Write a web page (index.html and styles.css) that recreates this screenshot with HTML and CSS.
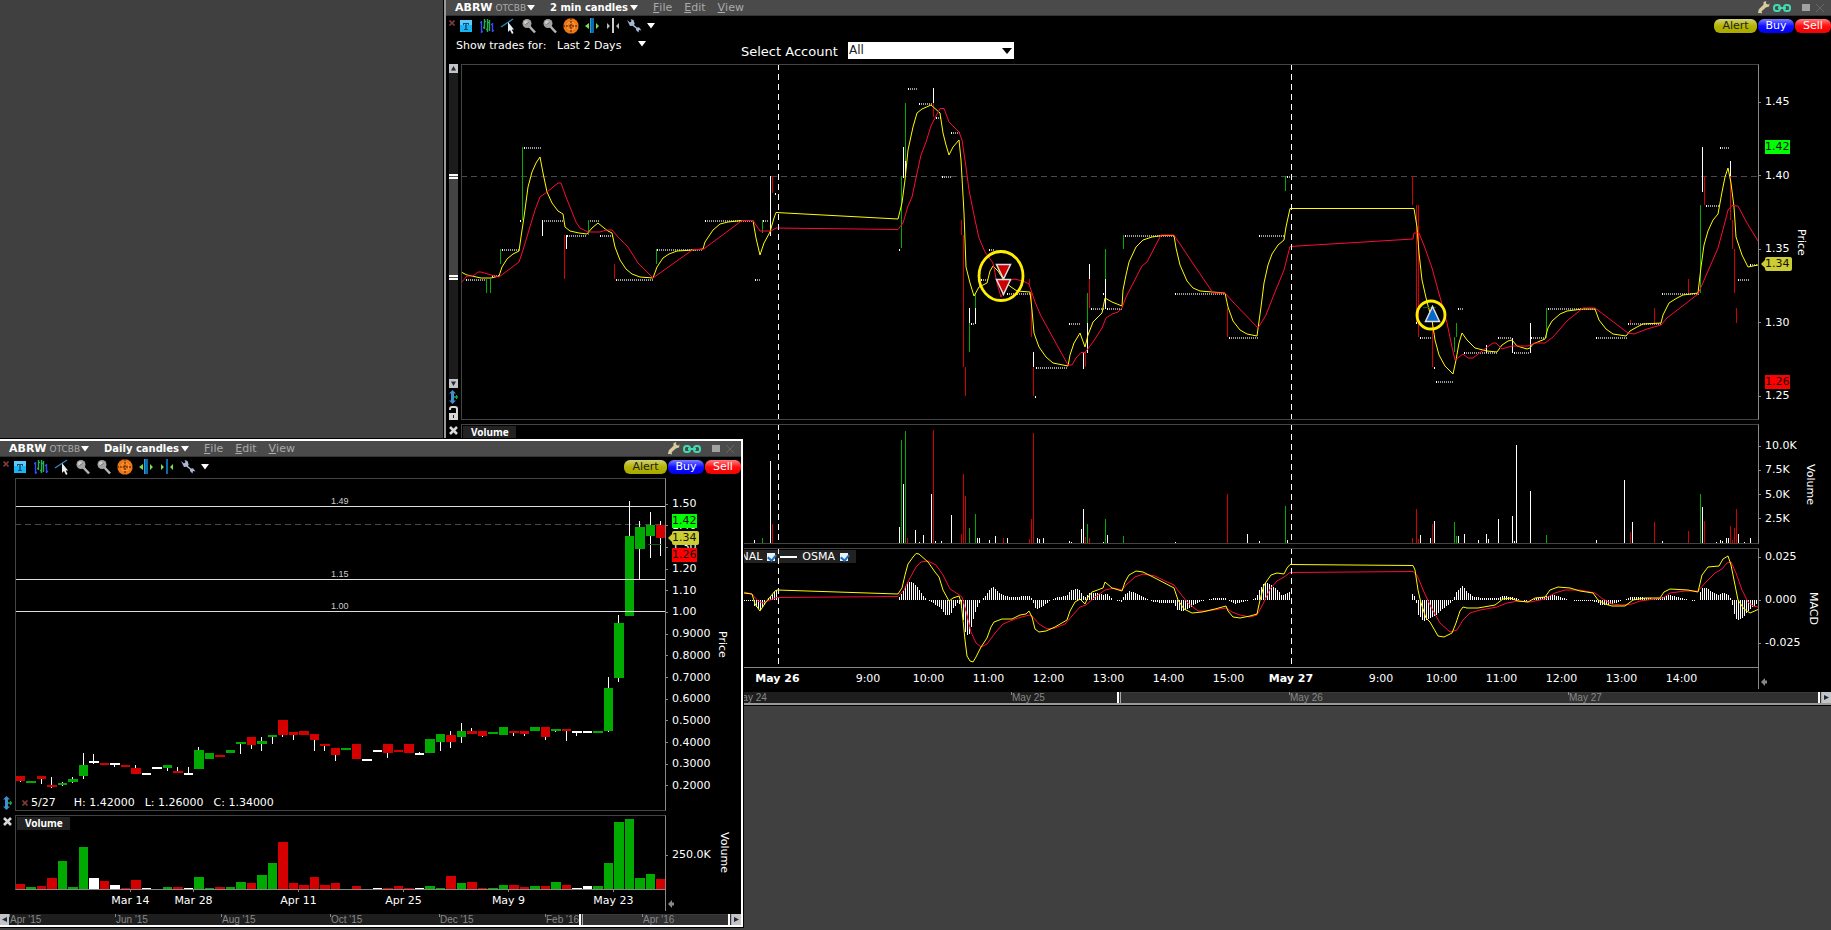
FILE: index.html
```html
<!DOCTYPE html>
<html lang="en">
<head>
<meta charset="utf-8">
<title>ABRW charts</title>
<link rel="stylesheet" href="styles.css">
</head>
<body>
<svg class="symbols" aria-hidden="true">
  <symbol id="i-text" viewBox="0 0 16 16"><rect x="2" y="2" width="12" height="12" fill="#1ab4f4"/><rect x="2" y="2" width="12" height="5" fill="#5ccdfa"/><path d="M5 5h6v2h-1V6H8.700v5H10v1H6v-1h1.300V6H6v1H5z" fill="#0d4a6b"/></symbol>
  <symbol id="i-bars" viewBox="0 0 16 16"><path d="M2.500 3v12M1 4.500h1.500M2.500 13.500H4M13.500 5v9M12 6.500h1.500M13.500 12.500H15" stroke="#3a48ff" stroke-width="1.400"/><path d="M5.500 1v10M4 9.500h1.500M5.500 3.500H7M8.500 1v13M10.500 2v11M8.500 4.500h2M7 11.500h1.500" stroke="#22b350" stroke-width="1.400" fill="none"/></symbol>
  <symbol id="i-cursor" viewBox="0 0 16 16"><path d="M1 9L13 1" stroke="#2f86c0" stroke-width="1.400"/><path d="M8 4v10l2-2 2 4 1.500-1-1.700-3.500H14z" fill="#e8eef2"/></symbol>
  <symbol id="i-zoom" viewBox="0 0 16 16"><path d="M8 8l6 6.500" stroke="#b4b4b4" stroke-width="2.500"/><circle cx="6" cy="5.500" r="4.500" fill="#a4a4a4"/><circle cx="5" cy="4.500" r="2" fill="#cfcfcf"/><path d="M4.500 6.500l3-2" stroke="#666"/></symbol>
  <symbol id="i-cross" viewBox="0 0 16 16"><circle cx="8" cy="8" r="7.700" fill="#ee7716"/><circle cx="8" cy="8" r="4" fill="none" stroke="#ff9b40"/><path d="M8 0v16M0 8h16" stroke="#3a1c02" stroke-dasharray="2 1"/></symbol>
  <symbol id="i-widen" viewBox="0 0 16 16"><rect x="6" width="4" height="15" fill="#0b6aa8"/><rect x="6" width="1" height="15" fill="#2e9bd6"/><path d="M5 5v6L1 8zM12 5v6l3-3z" fill="#7be04a"/></symbol>
  <symbol id="i-narrow" viewBox="0 0 16 16"><rect x="7" width="2" height="15" fill="#0b6aa8"/><path d="M2 5v6l3-3zM14 5v6l-3-3z" fill="#7be04a"/></symbol>
  <symbol id="i-narrow-off" viewBox="0 0 16 16"><rect x="7" width="2" height="15" fill="#ccc"/><path d="M2 5v6l3-3zM14 5v6l-3-3z" fill="#bbb"/></symbol>
  <symbol id="i-wrench" viewBox="0 0 16 16"><path d="M1 2l3 2.500L5.500 3 4.500 1l3 1 1.200 3.500-.7 1.500 3 2.500 2-.2 2.500 3.200-2.500-.5-.5 2.500-2.500-2.500v-1.500L6.500 7.800 4 8z" fill="#a9b7d2"/></symbol>
  <symbol id="i-key" viewBox="0 0 14 14"><path d="M1 13l1-4 5-5V1l3-1-.5 2.500L12 4l1.500-1.500L13 6 9.500 7 5 11l.5 2.500-2-.5z" fill="#d8cba0"/></symbol>
  <symbol id="i-link" viewBox="0 0 18 10"><rect x="1" y="2" width="6" height="6" rx="2.500" fill="none" stroke="#3fdcb0" stroke-width="2"/><rect x="11" y="2" width="6" height="6" rx="2.500" fill="none" stroke="#3fdcb0" stroke-width="2"/><path d="M5 5h8" stroke="#3fdcb0" stroke-width="2"/></symbol>
  <symbol id="i-square" viewBox="0 0 8 7"><path d="M0 0h8v7H0z" fill="#a2a2a2"/></symbol>
  <symbol id="i-thinx" viewBox="0 0 8 8"><path d="M0 0l8 8M8 0L0 8" stroke="#666"/></symbol>
  <symbol id="i-redx" viewBox="0 0 6 6"><path d="M.5 .5l5 5M5.500 .5l-5 5" stroke="#7c3a3a" stroke-width="1.600"/></symbol>
  <symbol id="i-fatx" viewBox="0 0 9 9"><path d="M1 1l7 7M8 1L1 8" stroke="#d8d8d8" stroke-width="2.500"/></symbol>
  <symbol id="i-caret" viewBox="0 0 8 6"><path d="M0 0h8L4 5.500z" fill="#fff"/></symbol>
  <symbol id="i-updown" viewBox="0 0 9 14"><path d="M3.500 0l3.500 3.500H5v7h2L3.500 14 0 10.500h2v-7H0z" fill="#3f8fd2"/><path d="M5 7h4M7.500 5v4" stroke="#12a84a" stroke-width="1.300"/></symbol>
  <symbol id="i-lock" viewBox="0 0 9 14"><path d="M1 4V3q0-2 2-2h3q2 0 2 2v4" fill="none" stroke="#d6d6d6" stroke-width="2"/><rect y="7" width="9" height="7" fill="#d6d6d6"/><path d="M4.500 9v3" stroke="#222"/></symbol>
  <symbol id="i-up" viewBox="0 0 9 9"><path d="M0 0h9v9H0z" fill="#c4c4c4"/><path d="M4.500 2L7 6.500H2z" fill="#1c2a44"/></symbol>
  <symbol id="i-down" viewBox="0 0 9 9"><path d="M0 0h9v9H0z" fill="#c4c4c4"/><path d="M4.500 7L7 2.500H2z" fill="#1c2a44"/></symbol>
  <symbol id="i-left" viewBox="0 0 9 11"><path d="M0 0h9v11H0z" fill="#c4c4c4"/><path d="M2 5.500L7 3v5z" fill="#1c2a44"/></symbol>
  <symbol id="i-right" viewBox="0 0 9 11"><path d="M0 0h9v11H0z" fill="#c4c4c4"/><path d="M7 5.500L2 3v5z" fill="#1c2a44"/></symbol>
  <symbol id="i-back" viewBox="0 0 6 8"><path d="M0 4l4-4v2.500h2v3H4V8z" fill="#888"/></symbol>
</svg>

<main class="desktop">
  <section class="window window-intraday" aria-label="2 minute chart">
    <header class="titlebar">
      <button class="symbol"><b>ABRW</b> <span>OTCBB</span><svg class="caret"><use href="#i-caret"/></svg></button>
      <button class="period">2 min candles<svg class="caret"><use href="#i-caret"/></svg></button>
      <nav class="menu"><button><u>F</u>ile</button><button><u>E</u>dit</button><button><u>V</u>iew</button></nav>
      <div class="winctl">
        <button aria-label="Settings"><svg width="13" height="13"><use href="#i-key"/></svg></button>
        <button aria-label="Link"><svg width="18" height="10"><use href="#i-link"/></svg></button>
        <button class="max" aria-label="Maximize"><svg width="8" height="7"><use href="#i-square"/></svg></button>
        <button aria-label="Close"><svg width="8" height="8"><use href="#i-thinx"/></svg></button>
      </div>
    </header>
    <div class="toolbar">
      <button class="hide" aria-label="Hide toolbar"><svg width="6" height="6"><use href="#i-redx"/></svg></button>
      <button class="tool" aria-label="Text"><svg><use href="#i-text"/></svg></button>
      <button class="tool" aria-label="Bars"><svg><use href="#i-bars"/></svg></button>
      <button class="tool" aria-label="Trend line"><svg><use href="#i-cursor"/></svg></button>
      <button class="tool" aria-label="Zoom in"><svg><use href="#i-zoom"/></svg></button>
      <button class="tool" aria-label="Zoom out"><svg><use href="#i-zoom"/></svg></button>
      <button class="tool" aria-label="Crosshair"><svg><use href="#i-cross"/></svg></button>
      <button class="tool" aria-label="Widen"><svg><use href="#i-widen"/></svg></button>
      <button class="tool" aria-label="Narrow"><svg><use href="#i-narrow-off"/></svg></button>
      <button class="tool" aria-label="Configure"><svg><use href="#i-wrench"/></svg></button>
      <button aria-label="More"><svg class="caret"><use href="#i-caret"/></svg></button>
      <div class="orders"><button class="alert">Alert</button><button class="buy">Buy</button><button class="sell">Sell</button></div>
    </div>
    <div class="filters">
      <span class="trades">Show trades for:</span>
      <button class="days">Last 2 Days<svg class="caret"><use href="#i-caret"/></svg></button>
      <label for="account">Select Account</label>
      <span class="combo"><select id="account"><option>All</option></select></span>
    </div>

    <div class="panel panel-price">
      <div class="gutter">
        <button aria-label="Scroll up"><svg width="9" height="9"><use href="#i-up"/></svg></button>
        <svg class="vtrack" viewBox="0 0 9 303" preserveAspectRatio="none"><path d="M0 0h9v303H0z" fill="#1c1c1c"/><path d="M0 104h9v101H0z" fill="#444"/><path d="M0 100h9v5H0zM0 200h9v5H0z" fill="#fff"/><path d="M0 102.500h9M0 202.500h9" stroke="#555"/></svg>
        <button aria-label="Scroll down"><svg width="9" height="9"><use href="#i-down"/></svg></button>
        <button class="gap" aria-label="Fit"><svg width="9" height="14"><use href="#i-updown"/></svg></button>
        <button class="gap" aria-label="Lock"><svg width="9" height="14"><use href="#i-lock"/></svg></button>
      </div>
      <div class="plot"><svg id="intraday-price" viewBox="462 65 1296 354" preserveAspectRatio="none"></svg></div>
      <div class="axis">
        <ol><li>1.45</li><li>1.40</li><li>1.35</li><li>1.30</li><li>1.25</li></ol>
        <span class="vtitle">Price</span>
        <span class="tag high">1.42</span><span class="tag last">1.34</span><span class="tag low">1.26</span>
      </div>
    </div>
    <div class="panel panel-volume">
      <div class="gutter"><button class="gap" aria-label="Remove volume"><svg width="9" height="9"><use href="#i-fatx"/></svg></button></div>
      <div class="plot"><svg id="intraday-volume" viewBox="462 425 1296 118" preserveAspectRatio="none"></svg><span class="study">Volume</span></div>
      <div class="axis"><ol><li>10.0K</li><li>7.5K</li><li>5.0K</li><li>2.5K</li></ol><span class="vtitle">Volume</span></div>
    </div>
    <div class="panel panel-macd">
      <div class="gutter"></div>
      <div class="plot base">
        <div class="legend">
          <label>SIGNAL <input type="checkbox" checked></label>
          <label><i></i>OSMA <input type="checkbox" checked></label>
        </div>
        <svg id="intraday-macd" viewBox="462 549 1296 118" preserveAspectRatio="none"></svg>
      </div>
      <div class="axis"><ol><li>0.025</li><li>0.000</li><li>-0.025</li></ol><span class="vtitle">MACD</span></div>
    </div>
    <div class="timeline"><svg class="times" id="intraday-times"></svg><svg class="back"><use href="#i-back"/></svg></div>
    <div class="strip"><svg id="intraday-strip"></svg><button aria-label="Scroll right"><svg width="9" height="11"><use href="#i-right"/></svg></button></div>
  </section>

  <section class="window window-daily" aria-label="Daily chart">
    <header class="titlebar">
      <button class="symbol"><b>ABRW</b> <span>OTCBB</span><svg class="caret"><use href="#i-caret"/></svg></button>
      <button class="period">Daily candles<svg class="caret"><use href="#i-caret"/></svg></button>
      <nav class="menu"><button><u>F</u>ile</button><button><u>E</u>dit</button><button><u>V</u>iew</button></nav>
      <div class="winctl">
        <button aria-label="Settings"><svg width="13" height="13"><use href="#i-key"/></svg></button>
        <button aria-label="Link"><svg width="18" height="10"><use href="#i-link"/></svg></button>
        <button class="max" aria-label="Maximize"><svg width="8" height="7"><use href="#i-square"/></svg></button>
        <button aria-label="Close"><svg width="8" height="8"><use href="#i-thinx"/></svg></button>
      </div>
    </header>
    <div class="toolbar">
      <button class="hide" aria-label="Hide toolbar"><svg width="6" height="6"><use href="#i-redx"/></svg></button>
      <button class="tool" aria-label="Text"><svg><use href="#i-text"/></svg></button>
      <button class="tool" aria-label="Bars"><svg><use href="#i-bars"/></svg></button>
      <button class="tool" aria-label="Trend line"><svg><use href="#i-cursor"/></svg></button>
      <button class="tool" aria-label="Zoom in"><svg><use href="#i-zoom"/></svg></button>
      <button class="tool" aria-label="Zoom out"><svg><use href="#i-zoom"/></svg></button>
      <button class="tool" aria-label="Crosshair"><svg><use href="#i-cross"/></svg></button>
      <button class="tool" aria-label="Widen"><svg><use href="#i-widen"/></svg></button>
      <button class="tool" aria-label="Narrow"><svg><use href="#i-narrow"/></svg></button>
      <button class="tool" aria-label="Configure"><svg><use href="#i-wrench"/></svg></button>
      <button aria-label="More"><svg class="caret"><use href="#i-caret"/></svg></button>
      <div class="orders"><button class="alert">Alert</button><button class="buy">Buy</button><button class="sell">Sell</button></div>
    </div>
    <div class="panel panel-price">
      <div class="gutter end"><button aria-label="Fit"><svg width="9" height="14"><use href="#i-updown"/></svg></button></div>
      <div class="plot"><svg id="daily-price" viewBox="16 479 649 331" preserveAspectRatio="none"></svg>
        <div class="readout"><svg width="6" height="6"><use href="#i-redx"/></svg><span class="date">5/27</span><span>H: 1.42000</span><span>L: 1.26000</span><span>C: 1.34000</span></div>
      </div>
      <div class="axis">
        <ol><li>1.50</li><li>1.40</li><li>1.30</li><li>1.20</li><li>1.10</li><li>1.00</li><li>0.9000</li><li>0.8000</li><li>0.7000</li><li>0.6000</li><li>0.5000</li><li>0.4000</li><li>0.3000</li><li>0.2000</li></ol>
        <span class="vtitle">Price</span>
        <span class="tag high">1.42</span><span class="tag low">1.26</span><span class="tag last">1.34</span>
      </div>
    </div>
    <div class="panel panel-volume">
      <div class="gutter"><button class="gap" aria-label="Remove volume"><svg width="9" height="9"><use href="#i-fatx"/></svg></button></div>
      <div class="plot base"><svg id="daily-volume" viewBox="16 816 649 73" preserveAspectRatio="none"></svg><span class="study">Volume</span></div>
      <div class="axis"><ol><li>250.0K</li></ol><span class="vtitle">Volume</span></div>
    </div>
    <div class="timeline"><svg class="times" id="daily-times"></svg><svg class="back"><use href="#i-back"/></svg></div>
    <div class="strip"><button aria-label="Scroll left"><svg width="9" height="11"><use href="#i-left"/></svg></button><svg id="daily-strip"></svg><button aria-label="Scroll right"><svg width="9" height="11"><use href="#i-right"/></svg></button></div>
  </section>
</main>
<script src="chart.js"></script>
</body>
</html>
```
FILE: styles.css
```css
* { box-sizing: border-box; }
body {
  margin: 0;
  background: #404040;
  color: #fff;
  font: 11px/14px "DejaVu Sans", sans-serif;
}
button {
  display: flex;
  align-items: center;
  margin: 0;
  padding: 0;
  border: 0;
  background: none;
  color: inherit;
  font: inherit;
}
svg { display: block; flex: none; }
.symbols { position: absolute; width: 0; height: 0; }
.desktop { position: relative; min-height: 100vh; overflow: hidden; }

/* windows */
.window { position: absolute; background: #000; box-shadow: 0 0 0 1px #000; }
.window-intraday { left: 444px; right: 0; top: 0; border-left: 2px solid #999; border-bottom: 2px solid #999; }
.window-daily { left: 0; top: 439px; width: 743px; border: solid #fff; border-width: 2px 2px 2px 0; }

.titlebar {
  display: flex;
  align-items: center;
  height: 16px;
  padding: 0 7px 0 9px;
  background: #4a4a4a;
  border-bottom: 1px solid #333;
}
.caret { width: 8px; height: 6px; }
.symbol { width: 95px; gap: 3px; }
.symbol b { font-size: 11px; }
.symbol span { color: #aaa; font-size: 9px; margin-right: -2px; }
.period { gap: 2px; font-weight: bold; font-size: 10px; }
.menu { display: flex; gap: 12px; margin-left: 15px; color: #aaa; }
.winctl { display: flex; align-items: center; gap: 3px; margin-left: auto; }
.winctl .max { margin: 0 3px 0 8px; }

.toolbar { display: flex; align-items: center; gap: 5px; height: 21px; padding: 0 0 1px 3px; }
.toolbar .hide { align-self: flex-start; margin: 4px -2px 0 0; }
.tool svg { width: 16px; height: 16px; }
.orders { display: flex; gap: 1px; margin-left: auto; }
.orders button { justify-content: center; width: 36px; height: 14px; border-radius: 6px; }
.orders .alert { width: 43px; color: #222; background: linear-gradient(#d2d27c, #b4b400 50%, #a8a800); }
.orders .buy { background: linear-gradient(#8080ff, #1010ff 50%, #0000f0); }
.orders .sell { background: linear-gradient(#ff8080, #ff1010 50%, #f40000); }

.filters { display: flex; align-items: flex-start; height: 27px; padding-left: 10px; }
.trades, .days { width: 101px; height: 17px; line-height: 17px; }
.days { gap: 17px; width: 184px; }
.days .caret { margin-bottom: 4px; }
.filters label { width: 107px; padding-top: 6px; font-size: 13px; line-height: 17px; }
.combo { position: relative; width: 166px; margin-top: 5px; }
.combo::after {
  content: "";
  position: absolute;
  right: 2px;
  top: 6px;
  border: 5px solid transparent;
  border-top: 6px solid #000;
  border-bottom: 0;
}
.combo select {
  display: block;
  width: 100%;
  height: 17px;
  padding: 0 1px;
  border: 0;
  border-radius: 0;
  appearance: none;
  background: #fff;
  color: #222;
  font: 12px/17px "DejaVu Sans", sans-serif;
}

/* chart panels */
.panel { display: grid; grid-template-columns: 15px 1fr 72px; margin-bottom: 4px; }
.window-daily .panel { grid-template-columns: 15px 1fr 75px; }
.window-intraday .panel-price { height: 356px; }
.window-intraday .panel-volume, .panel-macd { height: 120px; }
.window-daily .panel-price { height: 333px; }
.window-daily .panel-volume { height: 75px; }
.panel:has(.base) { margin-bottom: 0; }
.gutter { display: flex; flex-direction: column; padding-left: 3px; min-height: 0; }
.gutter .gap { margin-top: 2px; }
.gutter.end { justify-content: flex-end; padding-bottom: 1px; }
.vtrack { width: 9px; flex: 1 1 0; min-height: 0; }
.plot { position: relative; min-width: 0; min-height: 0; border: 1px solid #444; border-right-color: #888; }
.plot.base { border-bottom-color: #888; }
.plot > svg { position: relative; width: 100%; height: 100%; }
.axis { position: relative; display: flex; gap: 6px; }
.panel-price .axis { gap: 4px; }
.axis ol {
  display: flex;
  flex-direction: column;
  justify-content: space-between;
  margin: 0;
  padding: 31px 0 17px;
  list-style: none;
}
.window-intraday .panel-volume ol { padding: 15px 0 18px; }
.panel-macd ol { padding: 2px 0 18px; }
.window-daily .panel-price ol { padding: 19px 0 18px; }
.window-daily .panel-volume ol { padding: 33px 0 0; }
.axis li { display: flex; align-items: center; gap: 4px; }
.axis li::before { content: ""; width: 2px; height: 1px; background: #888; }
.vtitle { align-self: center; writing-mode: vertical-rl; }
.tag { position: absolute; left: 6px; width: 25px; line-height: 14px; color: #111; }
.tag.high { top: 76px; background: #00ff00; }
.tag.low { top: 311px; background: #ff0000; }
.tag.last { top: 193px; width: 27px; border-radius: 2px; background: #cccc33; }
.tag.last::before {
  content: "";
  position: absolute;
  left: -4px;
  top: 3px;
  border: 4px solid transparent;
  border-right-color: #cccc33;
  border-left: 0;
}
.window-daily .tag.high { top: 36px; }
.window-daily .tag.last { top: 53px; }
.window-daily .tag.low { top: 70px; }
.study {
  position: absolute;
  left: 1px;
  top: 1px;
  width: 53px;
  padding-left: 8px;
  background: #222;
  font: bold 10px/13px "Noto Sans", sans-serif;
}
.legend {
  position: absolute;
  left: 1px;
  top: 1px;
  width: 393px;
  height: 13px;
  display: flex;
  justify-content: flex-end;
  align-items: center;
  gap: 5px;
  padding-right: 8px;
  background: #222;
}
.legend label { display: flex; align-items: center; gap: 5px; }
.legend i { width: 17px; height: 2px; background: #fff; }
.legend input { position: relative; appearance: none; width: 8px; height: 8px; margin: 0; background: #eaf2fa; }
.legend input:checked::after {
  content: "";
  position: absolute;
  left: 2px;
  top: 0;
  width: 4px;
  height: 6px;
  border: solid #1a6fc4;
  border-width: 0 2px 2px 0;
  transform: rotate(40deg);
}
.readout { position: absolute; left: 6px; bottom: 0; display: flex; align-items: center; gap: 10px; }
.readout .date { margin: 0 8px 0 -7px; }

/* time axes */
.timeline { display: flex; align-items: center; height: 21px; margin: 0 72px 3px 15px; }
.window-daily .timeline { margin-right: 75px; }
.timeline .times { flex: 1; min-width: 0; height: 21px; border-right: 1px solid #888; overflow: visible; }
.timeline .back { width: 6px; height: 8px; margin: 6px -8px 0 2px; }
.times text { fill: #fff; font: 11px "DejaVu Sans", sans-serif; text-anchor: middle; }
.times .day { font-weight: bold; }
.strip { display: flex; height: 11px; background: #1e1e1e; }
.strip > svg { flex: 1; min-width: 0; height: 11px; }
.strip text { fill: #888; font: 10px "Liberation Sans", sans-serif; }

/* drawing */
.line { fill: none; stroke-width: 1px; vector-effect: non-scaling-stroke; }
.yellow { stroke: #fffb00; }
.crimson { stroke: #ff0a38; }
.level-text { fill: #ccc; font: 9px "Liberation Sans", sans-serif; }
.crisp { shape-rendering: crispEdges; }
```
FILE: chart.js
```javascript
const NS = 'http://www.w3.org/2000/svg';
const COLORS = { G: '#00aa00', R: '#d40000', W: '#ffffff' };

function add(svg, tag, attrs, text) {
  const el = document.createElementNS(NS, tag);
  for (const k in attrs) el.setAttribute(k, attrs[k]);
  if (text) el.textContent = text;
  svg.appendChild(el);
  return el;
}
const get = id => document.getElementById(id);
const rect = (svg, x, y, w, h, fill) => add(svg, 'rect', { x, y, width: w, height: h, fill, class: 'crisp' });
const line = (svg, points, cls) => add(svg, 'polyline', { points, class: 'line ' + cls });
const dashes = (svg, d, stroke) => add(svg, 'path', { d, stroke, 'stroke-dasharray': '6 4', class: 'crisp' });
const rows = text => text.trim().split(/\s+/).map(r => r.split(',').map(v => isNaN(v) ? v : +v));

/* ---- intraday price ---- */
const price = get('intraday-price');
dashes(price, 'M461 176.5H1758', '#4a4a4a');

rows(`466,486,280 492,500,276 502,519,250 524,541,148 542,563,221 567,587,236 588,599,221 600,613,236
616,654,280 657,703,250 705,753,221 763,769,221 755,761,280 775,777,194 908,918,89 919,932,104 936,941,118
951,961,133 942,951,177 981,988,280 989,994,250 971,975,324 1007,1030,294 1036,1068,368 1035,1036,397
1069,1080,324 1091,1104,309 1107,1122,309 1125,1174,236 1175,1226,294 1229,1258,338 1259,1284,236 1287,1290,177
1420,1431,338 1436,1453,382 1458,1463,309 1464,1497,353 1498,1512,338 1514,1529,353 1531,1545,338 1548,1595,309
1596,1627,338 1628,1661,324 1662,1699,294 1706,1719,206 1720,1729,148 1738,1749,280 1750,1758,265`)
  .forEach(([a, b, y]) => {
    for (let x = a; x < b; x += 2) rect(price, x, y - 1, 1, 2, x === a ? '#fff' : '#999');
  });

rows(`500,249,264,G 486,279,293,G 490,279,293,G 522,147,220,G 542,220,236,W 564,235,279,R 566,235,249,W
588,220,235,G 614,264,279,R 656,249,264,G 762,220,233,G 770,176,236,W 772,176,193,R 520,220,222,W 899,249,251,W
901,176,248,G 903,147,178,W 905,103,161,G 905,161,176,W 933,88,103,W 933,103,117,R 961,220,235,R 963,235,367,R
965,367,396,R 969,308,323,W 969,323,352,G 975,293,308,G 975,308,324,W 1031,293,337,R 1033,352,367,W
1033,367,396,R 1029,279,284,R 1083,352,369,W 1085,352,367,R 1087,293,323,G 1087,323,353,W 1089,264,279,W
1089,279,308,R 1103,293,295,W 1105,249,279,G 1105,279,309,W 1123,235,249,G 1227,308,337,R 1285,176,191,G
1412,176,205,R 1416,205,322,R 1416,322,324,W 1418,205,337,R 1432,322,367,R 1434,367,369,W 1454,337,352,G
1456,323,337,G 1486,345,353,W 1512,338,353,W 1530,323,353,W 1546,308,338,G 1654,308,323,R 1630,320,323,R
1688,279,293,R 1700,205,293,G 1702,147,192,W 1704,176,205,R 1730,161,176,W 1730,176,220,R 1732,220,249,R
1734,249,293,R 1736,308,323,R`)
  .forEach(([x, a, b, c]) => rect(price, x, a, 1, b - a, COLORS[c]));

line(price, `461,272 467,275 481,278 491,278 499,276 502,267 507,259 513,254 519,251 521,237 524,217 528,187 532,172
536,163 540,157 543,173 547,192 552,203 558,211 563,214 565,227 570,231 579,233 587,234 592,228 598,223 604,228
608,231 612,233 615,247 620,260 626,269 632,274 640,277 653,278 657,267 663,258 669,254 677,251 693,250 703,249
705,242 713,230 720,224 728,222 742,220.5 753,220.5 756,238 760,255 764,243 770,232 774,218 776,212.5 898,219
902,203 905,180 908,150 913,127 917,113 922,109 931,105 940,113 943,133 946,145 949,155 953,147 959,140 961,160
964,213 966,267 970,283 974,296 979,287 987,283 990,271 993,266 998,271 1005,282 1011,287 1017,291 1030,292
1032,310 1034,333 1039,347 1046,357 1053,363 1068,366 1070,355 1074,343 1080,333 1085,347 1088,335 1093,322
1102,313 1105,298 1112,302 1122,306 1123,290 1126,275 1129,262 1136,247 1143,240 1152,237 1162,235.5 1174,235.5
1176,248 1180,265 1187,281 1193,288 1200,291 1225,293 1228,307 1233,321 1240,330 1247,334 1257,336 1261,307
1264,283 1268,265 1272,254 1278,245 1284,240 1286,227 1290,208.5 1414,208.5 1417,227 1419,253 1422,280 1427,302
1432,320 1435,340 1439,355 1445,366 1453,374 1456,360 1459,343 1462,333 1467,340 1475,348 1487,351 1497,352
1502,345 1508,341 1512,340 1517,346 1527,349 1530,348 1533,344 1545,339 1548,328 1552,321 1560,314 1567,311
1583,309 1595,309 1599,320 1606,329 1613,334 1626,336 1630,331 1637,327 1643,324 1661,323 1663,315 1669,303
1677,298 1683,295 1698,293 1701,267 1704,245 1708,231 1713,220 1718,214 1722,192 1725,177 1728,168 1731,183
1734,207 1736,237 1742,255 1748,267 1753,266 1758,265`, 'yellow');
line(price, `461,283 467,276 473,276 478,272 481,272 491,275 499,277 519,262 523,250 529,230 535,210 540,197 547,192
558,183 561,183 566,197 570,207 576,222 580,228 588,232 600,232 606,230 612,230 618,237 628,247 638,263 653,278
693,249.500 703,249.500 742,220.500 753,220.500 760,231 771,231 776,228 898,229.500 903,223 908,206 912,197
916,178 921,155 926,142 931,126 936,116 940,108.500 944,108.500 949,122 959,132 962,140 966,167 969,190 975,220
979,238 985,252 993,263 997,283 1001,297 1003,293 1009,281 1014,279 1023,281 1029,284 1035,302 1041,316 1068,365
1072,365 1076,358 1081,352.500 1085,352.500 1093,342 1102,328 1106,318 1112,314 1118,312 1122,308 1126,297
1142,266 1147,262 1161,235 1174,235 1192,262 1213,293 1225,293 1233,302 1258,328 1266,315 1273,297 1284,270
1290,246.500 1413,239 1414,233 1419,233 1425,248 1432,268 1438,290 1443,308 1447,323 1452,347 1455,360 1463,354
1468,358 1473,358 1482,351 1493,343 1496,343 1502,349 1512,346 1528,346 1535,343 1545,343 1553,337 1567,321
1583,308 1595,308 1628,333 1634,334 1647,329 1661,325 1667,318 1698,294 1705,278 1718,248 1725,222 1728,210
1732,205.500 1738,206 1747,223 1758,241`, 'crimson');

rect(price, 1423, 307, 13, 1, '#0c5c0c');
add(price, 'ellipse', { cx: 1001, cy: 276, rx: 22, ry: 24.5, fill: 'none', stroke: '#ffee00', 'stroke-width': 2.8 });
add(price, 'circle', { cx: 1431, cy: 315, r: 14, fill: 'none', stroke: '#ffee00', 'stroke-width': 2.8 });
add(price, 'path', { d: 'M996.5 264.500h14l-7 14.500zM996.500 279.500h14l-7 15z', fill: '#cc0000', stroke: '#ddd', 'stroke-width': 1.5 });
add(price, 'path', { d: 'M1432.500 306.500l7 15h-14z', fill: '#0a66cc', stroke: '#ddd', 'stroke-width': 1.5 });

/* ---- intraday volume ---- */
const volume = get('intraday-volume');
rows(`754,540 762,538,G 770,461 772,524,R 899,527 901,440,G 903,484 905,431,G 907,538,R 915,530 919,542 923,535
931,494 933,430,R 935,541 941,541 951,515 961,534,R 963,474,R 965,496,R 969,528,G 975,514,G 977,538 979,538
989,540 995,536 1003,538,R 1007,538 1029,539,R 1031,519,R 1033,433,R 1037,538 1039,539 1043,538 1069,541
1071,542 1081,529 1083,509 1085,537,R 1087,524,G 1089,538,R 1103,542 1105,519,G 1107,535 1123,536,G 1175,542
1227,494,R 1247,534 1259,541 1285,506,G 1287,540 1412,538,R 1416,509,R 1418,539,R 1420,535 1430,538 1432,524,R
1434,521 1454,522,G 1456,536,G 1458,536 1464,534 1478,540 1486,534 1488,539 1498,519 1512,516 1514,541 1516,445
1530,491 1546,535,G 1596,540 1624,480 1630,532,R 1632,522 1654,522,R 1662,541 1688,531,R 1700,494,G 1702,507
1704,521,R 1716,542 1720,540 1722,541 1726,538 1728,538 1730,526,R 1732,540,R 1734,528,R 1736,509,R 1738,534
1744,542 1750,538`)
  .forEach(([x, y, c]) => rect(volume, x, y, 1, 543 - y, COLORS[c || 'W']));

/* ---- intraday MACD ---- */
const macd = get('intraday-macd');
[
  `730,-1 752,-1 754,-6 760,-10 764,-5 766,0 770,4 776,10 777,8`,
  `899,3 903,9 907,18 912,18 917,13 923,4 927,0 930,-1 935,-5 940,-8 945,-15 950,-15 953,-8 958,-2 961,-8 965,-32
   968,-37 971,-27 974,-15 978,-5 981,0 985,4 990,11 993,13 998,8 1005,4 1010,3 1030,4 1032,0 1034,-7 1036,-10
   1042,-7 1048,-2 1051,0 1058,3 1066,4 1071,10 1078,11 1082,5 1085,3 1089,7 1095,7 1103,5 1106,7 1110,3 1113,0
   1121,-2 1124,5 1129,9 1136,7 1144,2 1150,-1 1160,-3 1173,-3 1177,-10 1184,-11 1190,-8 1196,-3 1205,0 1215,2
   1225,2 1230,-2 1235,-4 1243,-2 1250,0 1256,2 1259,10 1264,17 1270,16 1277,10 1282,4 1288,8 1290,8`,
  `1412,6 1415,3 1418,-15 1423,-21 1430,-18 1435,-16 1441,-10 1449,-4 1453,0 1456,8 1462,14 1467,8 1474,3 1482,2
   1497,2 1503,4 1510,3 1518,1 1524,-1 1533,1 1543,3 1552,5 1560,3 1568,0 1576,-1 1590,-1 1597,-2 1600,-5 1607,-5
   1615,-3 1623,0 1630,3 1640,3 1655,1 1663,3 1668,5 1676,3 1684,1 1692,-1 1698,0 1701,12 1706,12 1712,8 1719,5
   1723,8 1728,5 1731,0 1734,-14 1737,-21 1742,-18 1749,-10 1755,-5 1758,-1`
].map(rows).forEach(keys => {
  let k = 0;
  for (let x = keys[0][0]; x < keys[keys.length - 1][0]; x += 2) {
    while (keys[k + 1][0] < x) k++;
    const [x0, h0] = keys[k], [x1, h1] = keys[k + 1];
    const h = Math.round(h0 + (h1 - h0) * (x - x0) / (x1 - x0));
    if (h) rect(macd, x, h > 0 ? 600 - h : 600, 1, Math.abs(h), '#fff');
  }
});
line(macd, `730,592 744,592 752,594 758,601 763,603 770,600 777,597.500 898,596.500 904,590 910,578 916,567 921,562
928,561 936,565 943,575 950,589 958,594 962,597 966,611 971,632 976,643 981,647 987,644 995,633 1003,624 1015,619
1029,615 1032,616 1039,624 1047,629 1055,628 1065,624 1072,616 1080,607 1086,605 1095,597 1105,590 1114,588
1122,590 1127,584 1135,577 1143,574 1155,576 1165,581 1174,585 1180,593 1188,603 1198,611 1207,611 1226,608
1232,612 1240,615 1250,617 1257,615 1263,604 1270,589 1277,581 1284,577 1290,572.500 1413,571.500 1417,575
1424,592 1431,607 1440,623 1450,632 1457,630 1463,620 1470,613 1480,610 1497,607 1507,603 1518,601 1530,602
1545,599 1555,593 1565,590 1580,590 1595,593 1603,599 1612,604 1622,605 1632,604 1640,601 1655,599 1663,598
1670,593 1685,591 1698,591 1706,582 1715,573 1722,569 1727,563 1731,562 1736,573 1742,590 1748,602 1753,606
1758,607`, 'crimson');
line(macd, `730,593 744,593 752,594 755,604 760,611 766,602 775,591 777,590 898,594 902,588 905,575 908,564 913,557
916,553.500 919,554 928,562 935,572 939,577 943,590 949,601 953,598 959,596 961,602 963,620 965,640 967,656 970,661
973,662 976,657 981,647 987,638 991,627 994,622 1002,619 1012,619 1020,615 1026,614 1029,611 1032,617 1035,629
1039,632 1046,631 1055,627 1067,620 1070,611 1075,602 1080,599 1085,604 1088,597 1092,592 1103,588 1105,582
1112,588 1122,591 1125,582 1129,575 1136,571 1143,572 1155,578 1174,588 1178,600 1184,609 1192,613 1202,612
1215,609 1226,606 1228,611 1233,617 1240,618 1250,616 1257,614 1260,600 1264,585 1271,575 1277,573 1284,574
1287,568 1290,564.500 1413,565.500 1415,570 1418,590 1421,603 1426,618 1430,622 1438,636 1444,637 1452,633
1456,623 1460,611 1463,607 1467,608 1478,608 1495,605 1503,599 1510,598 1518,601 1528,602 1535,598 1545,597
1550,590 1558,587 1570,588 1580,591 1593,593 1598,600 1605,604 1612,606 1625,606 1633,600 1645,598 1660,598
1664,592 1670,589 1688,590 1698,592 1702,575 1708,567 1719,566 1723,559 1728,556 1731,565 1734,580 1738,600
1744,609 1750,613 1758,609.500`, 'yellow');

/* session boundaries */
[[price, 64, 419], [volume, 424, 543], [macd, 548, 665]].forEach(([svg, a, b]) => {
  [778.5, 1291.5].forEach(x => dashes(svg, `M${x} ${a}V${b}`, '#fff'));
});

/* ---- daily price and volume: colour, body top, body bottom, wick top, wick bottom, volume top ---- */
const daily = get('daily-price');
const dailyVolume = get('daily-volume');
dashes(daily, 'M15 524.5H665', '#4a4a4a');
rows(`R,776,781,776,782,884 G,781,783,781,783,887 R,776,779,776,784,886 R,785,787,777,788,878 G,783,785,782,786,861
G,779,782,777,783,887 G,765,776,753,779,847 W,761,763,754,764,878 R,763,765,763,765,881 W,763,765,763,767,885
R,765,767,765,767,888 R,768,774,765,774,880 W,773,775,773,775,888 W,767,769,767,769,889 G,765,768,765,771,887
R,771,773,767,773,887 W,773,775,767,775,888 G,750,769,747,769,877 G,753,759,753,759,888 R,755,757,755,757,887
G,750,753,750,753,887 G,742,744,742,754,882 R,737,745,737,749,883 G,741,744,737,751,875 G,735,737,735,744,863
R,720,735,720,737,842 R,732,735,732,740,883 R,731,735,731,735,885 R,734,740,734,751,877 R,744,746,744,751,885
R,748,755,748,761,883 G,748,750,748,750,889 R,744,759,744,759,886 W,759,761,759,761,889 W,750,752,750,752,888
R,744,753,744,758,888 R,750,752,750,752,886 R,744,753,744,753,888 W,753,755,752,755,888 G,739,753,739,753,886
G,734,742,734,751,888 R,735,742,731,748,876 G,731,737,723,743,883 R,731,734,728,734,882 R,731,736,731,737,888
G,732,734,732,734,888 G,727,735,727,735,885 R,731,733,731,736,885 R,731,734,731,736,887 G,727,731,727,731,886
R,727,737,727,740,886 G,729,731,729,732,882 R,729,731,729,741,885 W,731,733,731,736,888 W,731,733,731,733,886
G,731,733,731,733,886 G,688,731,677,732,863 G,623,678,615,682,822 G,536,616,501,616,819 G,527,549,521,579,878
G,525,536,512,558,874 R,525,538,521,556,879`)
  .forEach(([c, top, bottom, high, low, v], i) => {
    const x = Math.round(15.5 + i * 10.5);
    rect(daily, x + 4, high, 1, low - high, '#fff');
    rect(daily, x, top, 9 + i % 2, bottom - top, COLORS[c]);
    rect(dailyVolume, x, v, 9 + i % 2, 889 - v, COLORS[c]);
  });
rect(daily, 648, 544, 14, 1, '#0c5c0c');
[['1.49', 506], ['1.15', 579], ['1.00', 611]].forEach(([label, y]) => {
  rect(daily, 15, y, 650, 1, '#ddd');
  add(daily, 'text', { x: 331, y: y - 2, class: 'level-text' }, label);
});

/* ---- time axes ---- */
function times(id, start, width, labels, ticks) {
  const svg = get(id);
  labels.forEach(([text, at]) => {
    const x = (at - start) / width * 100 + '%';
    add(svg, 'text', { x, y: 14, class: /^May 2[67]/.test(text) ? 'day' : '' }, text);
    if (ticks) add(svg, 'line', { x1: x, x2: x, y1: 0, y2: 2, stroke: '#888' });
  });
}
times('intraday-times', 461, 1297, [['May 26', 777.5], ['9:00', 868], ['10:00', 928.5], ['11:00', 988.5],
  ['12:00', 1048.5], ['13:00', 1108.5], ['14:00', 1168.5], ['15:00', 1228.5], ['May 27', 1291], ['9:00', 1381],
  ['10:00', 1441.5], ['11:00', 1501.5], ['12:00', 1561.5], ['13:00', 1621.5], ['14:00', 1681.5]]);
times('daily-times', 15, 650, [['Mar 14', 130.5], ['Mar 28', 193.5], ['Apr 11', 298.5], ['Apr 25', 403.5],
  ['May 9', 508.5], ['May 23', 613.5]], true);

function strip(id, start, width, from, to, labels) {
  const svg = get(id);
  const pct = v => v / width * 100 + '%';
  add(svg, 'rect', { x: pct(from - start), y: 0, width: pct(to - from), height: 11, fill: '#3a3a3a' });
  add(svg, 'rect', { x: pct(from - start), y: 1, width: pct(to - from), height: 10, fill: '#303030' });
  labels.forEach(([text, x]) => {
    add(svg, 'rect', { x: pct(x - start), y: 0, width: 1, height: 3, fill: '#888' });
    add(svg, 'text', { x: pct(x + 1 - start), y: 9 }, text);
  });
  [from, to - 4].forEach(x => {
    add(svg, 'rect', { x: pct(x - start), y: 0, width: 2, height: 11, fill: '#fff' });
    add(svg, 'rect', { x: pct(x + 3 - start), y: 0, width: 1, height: 11, fill: '#aaa' });
  });
}
strip('intraday-strip', 446, 1376, 1117, 1822, [['May 24', 733], ['May 25', 1011], ['May 26', 1289], ['May 27', 1568]]);
strip('daily-strip', 9, 723, 579, 732, [["Apr '15", 9], ["Jun '15", 115], ["Aug '15", 221], ["Oct '15", 330],
  ["Dec '15", 439], ["Feb '16", 545], ["Apr '16", 642]]);
```
